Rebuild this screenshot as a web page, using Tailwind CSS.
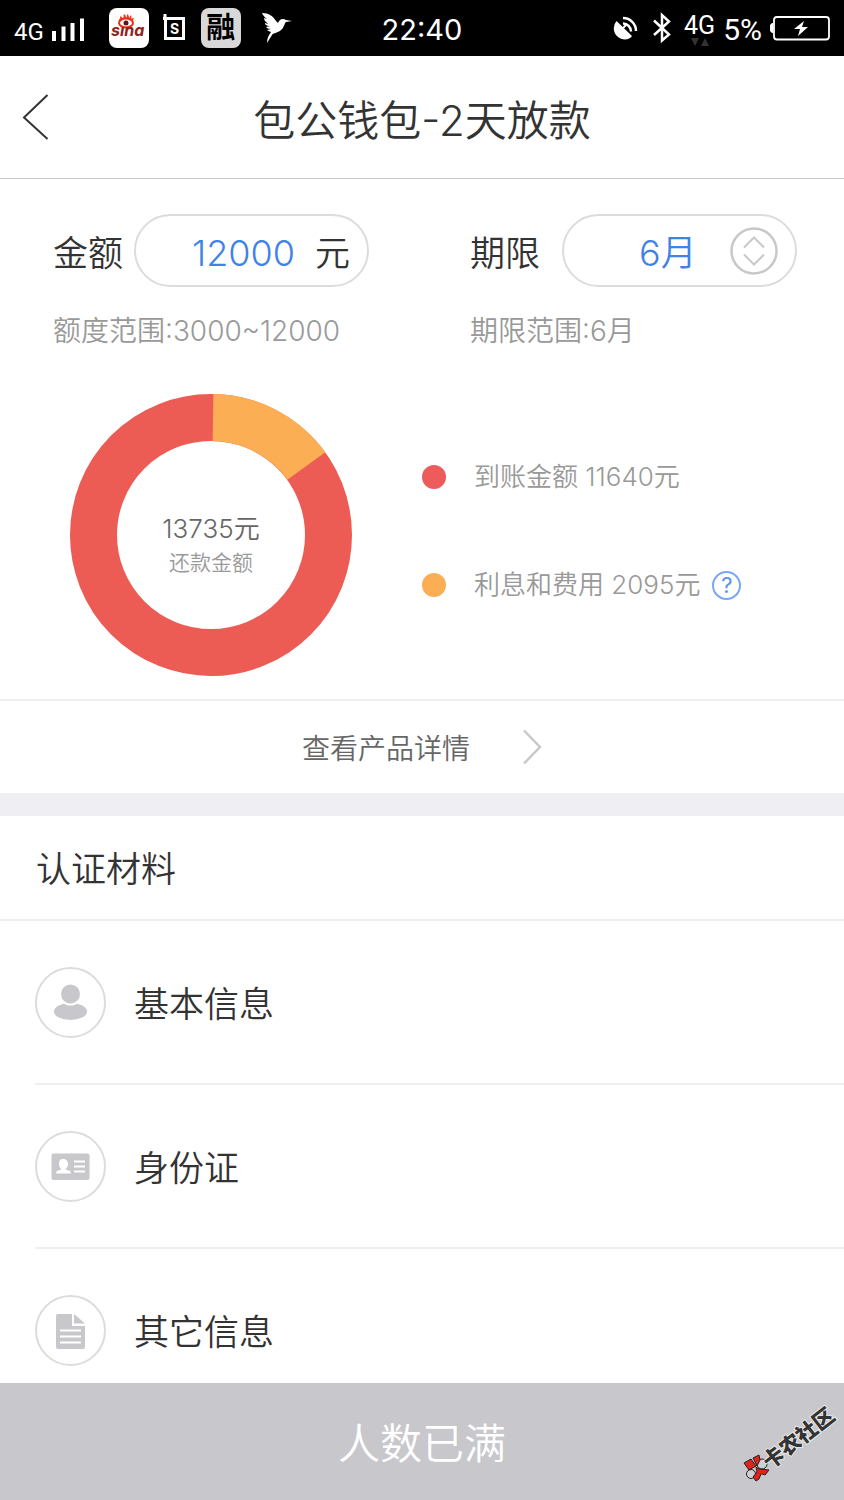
<!DOCTYPE html>
<html lang="zh-CN">
<head>
<meta charset="utf-8">
<meta name="viewport" content="width=device-width, initial-scale=1">
<title>包公钱包-2天放款</title>
<script src="https://cdn.jsdelivr.net/npm/@tailwindcss/browser@4"></script>
</head>
<body class="flex h-screen flex-col overflow-hidden bg-white font-['Inter','Noto_Sans_CJK_SC',sans-serif] font-[350] text-[#333333]">

<!-- Status bar -->
<div class="grid h-14 shrink-0 grid-cols-[1fr_auto_1fr] items-center bg-black px-[14px] text-white">
  <div class="flex items-center">
    <span class="pt-2 font-['Roboto'] text-[24px] leading-7 font-normal">4G</span>
    <svg class="ml-2 h-7 w-9" viewBox="0 0 36 28" fill="#fff"><path d="M0 17h4v10H0zM9.500 12.500h4V27h-4zM18.500 9h4v18h-4zM28 4.500h4V27h-4z"/></svg>
    <svg class="ml-[21px] size-10" viewBox="0 0 40 40">
      <rect width="40" height="40" rx="8" fill="#fff"/>
      <path d="M10 14C9 11 12 11 11 8c2 1 3 2 3 3 1-2 0-3 1-5 2 1 2 3 2 4 1-1 1-3 1-4 2 1 2 3 2 4 1-1 1-2 2-3 1 2 0 3 0 4 1-1 2-1 3-1-1 2-1 3-2 4z" fill="#ff3418"/>
      <ellipse cx="17" cy="15" rx="7" ry="4.500" fill="#fff" stroke="#e8301c" stroke-width="2"/>
      <circle cx="17" cy="15" r="2.500" fill="#5c1712"/>
      <text x="2" y="28" font-family="Inter" font-size="16" font-weight="700" font-style="italic" fill="#8f241b">sına</text>
    </svg>
    <svg class="ml-[14px] h-7 w-6" viewBox="0 0 24 28" fill="none" stroke="#fff"><path d="M2 0v3.500M0 4.500h20.500v20H2.500v-20" stroke-width="3"/><text x="7" y="19.500" font-family="Inter" font-size="14" font-weight="700" fill="#fff" stroke="none">S</text></svg>
    <span class="ml-[14px] flex size-10 items-center justify-center rounded-lg bg-[#d8d8d8] text-[29px] leading-10 font-bold text-black">融</span>
    <svg class="ml-5 h-8 w-8" viewBox="0 0 32 32" fill="#fff"><path d="M1 1C8 1 12 4 15 9l2 2c1-2 2-4 5-4 2 0 2 1 3 1l6 1-6 1c-2 2-2 6-5 8-3 3-8 3-9 5L6 31c0-5 2-8 4-11-2-1-3-1-4-2l4-1c-3 0-4-1-5-2l4-1C5 14 4 12 4 11l3 1C4 9 3 8 3 6l3 1C3 5 2 3 1 1z"/></svg>
  </div>
  <span class="pt-1 text-[29px] leading-8 font-normal">22:40</span>
  <div class="flex items-center justify-end">
    <svg class="h-7 w-7" viewBox="0 0 28 28"><path d="M4.500 7a11 11 0 0 0 1 15.500c4 4 12 4 14.500-.5z" fill="#fff"/><path d="M10 15l5-5" stroke="#fff" stroke-width="2"/><path d="M11 9.500a8 8 0 0 1 8 8M11 4a13 13 0 0 1 13 13" fill="none" stroke="#fff" stroke-width="2.500"/></svg>
    <svg class="ml-3 h-8 w-5" viewBox="0 0 20 32" fill="none" stroke="#fff" stroke-width="2.500"><path d="M2 8.500l15 14-7 6V3l7 6.500L2 23"/></svg>
    <span class="ml-3 flex flex-col items-center pt-1">
      <span class="font-['Roboto'] text-[25px] leading-6 font-normal">4G</span>
      <svg class="h-2 w-5" viewBox="0 0 20 8" fill="#333"><path d="M1 0h8L5 8zM11 8h8L15 0z"/></svg>
    </span>
    <span class="ml-2 pt-1 font-['Roboto'] text-[30px] leading-8 font-normal">5%</span>
    <svg class="ml-2 h-7 w-[60px]" viewBox="0 0 60 28"><rect x="4" y="3" width="55" height="22.500" rx="3" fill="none" stroke="#fff" stroke-width="1.800"/><path d="M3 9v10H2l-2-2v-6l2-2z" fill="#fff"/><path d="M34 7l-10 8h6l-2 7 10-9h-6z" fill="#fff"/></svg>
  </div>
</div>

<!-- Title bar -->
<header class="grid h-[123px] shrink-0 grid-cols-[72px_1fr_72px] items-center border-b border-[#c8c8c8]">
  <button type="button" aria-label="返回" class="flex h-full items-center pl-[22px]">
    <svg class="h-12 w-7" viewBox="0 0 28 48" fill="none" stroke="#333" stroke-width="2"><path d="M25.500 2L2 24.500 25.500 46"/></svg>
  </button>
  <h1 class="pt-2 text-center text-[42px] leading-[60px]">包公钱包-2天放款</h1>
</header>

<main class="min-h-0 flex-1 overflow-y-auto [scrollbar-width:none]">
  <section class="border-b-2 border-[#efeff1] pb-[23px]">
    <!-- Amount and term -->
    <div class="grid grid-cols-[417fr_327fr] pt-[35px] pr-[47px] pl-[53px]">
      <div>
        <div class="flex items-center">
          <label for="amount" class="w-[81px] pt-1 text-[35px] leading-[50px]">金额</label>
          <div class="flex h-[73px] w-[235px] items-center rounded-full border-2 border-[#dcdcde] pr-[17px]">
            <input id="amount" type="text" inputmode="numeric" value="12000" class="h-full min-w-0 flex-1 pt-1 text-right text-[36px] text-[#3f82e8] outline-none">
            <span class="ml-5 pt-1 text-[35px] leading-[50px]">元</span>
          </div>
        </div>
        <p class="pt-6 text-[28px] leading-10 text-[#999999]">额度范围:3000~12000</p>
      </div>
      <div>
        <div class="flex items-center">
          <label for="term" class="flex-1 pt-1 text-[35px] leading-[50px]">期限</label>
          <div class="flex h-[73px] w-[235px] items-center rounded-full border-2 border-[#dcdcde] pr-[17px]">
            <select id="term" class="h-full min-w-0 flex-1 appearance-none pt-1 pl-[75px] text-[36px] text-[#3f82e8] outline-none"><option>6月</option></select>
            <svg class="size-12" viewBox="0 0 48 48" fill="none" stroke="#c8c7cc"><circle cx="24" cy="24" r="22.500" stroke-width="2.500"/><path d="M14 20.500L24 10.500l10 10M14 27.500l10 10 10-10" stroke-width="2"/></svg>
          </div>
        </div>
        <p class="pt-6 text-[28px] leading-10 text-[#999999]">期限范围:6月</p>
      </div>
    </div>

    <!-- Repayment breakdown -->
    <div class="flex items-center pt-[43px] pl-[70px]">
      <div class="grid size-[282px] shrink-0 place-items-center">
        <svg class="col-start-1 row-start-1 size-full" viewBox="0 0 282 282" fill="none" stroke-width="47"><circle cx="141" cy="141" r="117.500" stroke="#ed5b55"/><path d="M143 23.500A117.500 117.500 0 0 1 236.300 72" stroke="#fbae54"/></svg>
        <div class="col-start-1 row-start-1 pt-5 text-center">
          <p class="text-[26px] leading-9 text-[#666666]">13735元</p>
          <p class="text-[21px] leading-8 text-[#999999]">还款金额</p>
        </div>
      </div>
      <ul class="ml-[70px] flex flex-col gap-[68px] pb-2 text-[26px] leading-10 text-[#999999]">
        <li class="flex items-center"><span class="mr-7 size-6 rounded-full bg-[#ed5b5b]"></span>到账金额 11640元</li>
        <li class="flex items-center"><span class="mr-7 size-6 rounded-full bg-[#fbae54]"></span>利息和费用 2095元
          <button type="button" aria-label="费用说明" class="ml-3 flex size-[29px] items-center justify-center rounded-full border-2 border-[#79a6f5] text-[22px] leading-6 font-normal text-[#5a90f0]">?</button>
        </li>
      </ul>
    </div>
  </section>

  <a href="#detail" class="flex h-[92px] items-center justify-center text-[28px] text-[#666666]">
    <span class="pt-1">查看产品详情</span>
    <svg class="ml-[52px] h-9 w-5" viewBox="0 0 20 36" fill="none" stroke="#c8c7cc" stroke-width="2.500"><path d="M2 1.500L18 18 2 34.500"/></svg>
  </a>
  <div class="h-[23px] bg-[#eeeef3]"></div>

  <section>
    <h2 class="flex h-[105px] items-center border-b-2 border-[#efeff1] pt-1 pl-9 text-[35px]">认证材料</h2>
    <ul class="pl-[35px] text-[35px]">
      <li class="border-b-2 border-[#efeff1]">
        <a href="#basic" class="flex h-[162px] items-center gap-7">
          <svg class="size-[71px]" viewBox="0 0 71 71"><circle cx="35.500" cy="35.500" r="34.500" fill="none" stroke="#dcdcde" stroke-width="2"/><ellipse cx="35.500" cy="44.500" rx="16.500" ry="8.500" fill="#c8c7cc"/><circle cx="35.500" cy="27" r="10.500" fill="#c8c7cc" stroke="#fff" stroke-width="2"/></svg>
          <span class="pt-1">基本信息</span>
        </a>
      </li>
      <li class="border-b-2 border-[#efeff1]">
        <a href="#idcard" class="flex h-[162px] items-center gap-7">
          <svg class="size-[71px]" viewBox="0 0 71 71"><circle cx="35.500" cy="35.500" r="34.500" fill="none" stroke="#dcdcde" stroke-width="2"/><rect x="16.500" y="22.500" width="38" height="26.500" rx="2" fill="#c8c7cc"/><path d="M28 28c3 0 5 2 5 5q0 3-2 4.500v1l4 1.500q1 1 1 2.500H21q0-2 1-2.500l4-1.500v-1q-2-1.500-2-4.500c0-3 1-5 4-5zM39 29.500h11v2H39zM39 34.500h11v2H39zM39 39.500h11v2H39z" fill="#fff"/></svg>
          <span class="pt-1">身份证</span>
        </a>
      </li>
      <li>
        <a href="#other" class="flex h-[162px] items-center gap-7">
          <svg class="size-[71px]" viewBox="0 0 71 71"><circle cx="35.500" cy="35.500" r="34.500" fill="none" stroke="#dcdcde" stroke-width="2"/><path d="M23 19h14v12h13v21q0 2-2 2H23q-2 0-2-2V21q0-2 2-2zM39 19l11 9.500H39z" fill="#c8c7cc"/><path d="M25 35.500h21M25 41.500h21M25 47.500h21" stroke="#fff" stroke-width="2"/></svg>
          <span class="pt-1">其它信息</span>
        </a>
      </li>
    </ul>
  </section>
</main>

<footer class="relative h-[117px] shrink-0 bg-[#c8c7cc]">
  <button type="button" class="size-full pt-1 text-[42px] text-white">人数已满</button>
  <svg class="pointer-events-none absolute right-0 bottom-0 h-[117px] w-[124px]" viewBox="0 0 124 117">
    <g fill="#d0cfd3" stroke="#222" stroke-width="1"><circle cx="42" cy="81" r="5"/><circle cx="31" cy="91" r="4.500"/></g>
    <g fill="#e2231a" stroke="#222" stroke-width="1"><path d="M24 80l7-4 5 7-7 4zM33 75l6-3 1 5-3 6zM36 84l3 2 10 1-4 5-3-1-1 0-2 5-3 2-3-4 4-5z"/></g>
    <text transform="translate(50 87) rotate(-38)" font-family="Noto Sans CJK SC" font-size="21" font-weight="900" fill="#333" stroke="#e8e8e8" stroke-width="2" paint-order="stroke">卡农社区</text>
  </svg>
</footer>
</body>
</html>
